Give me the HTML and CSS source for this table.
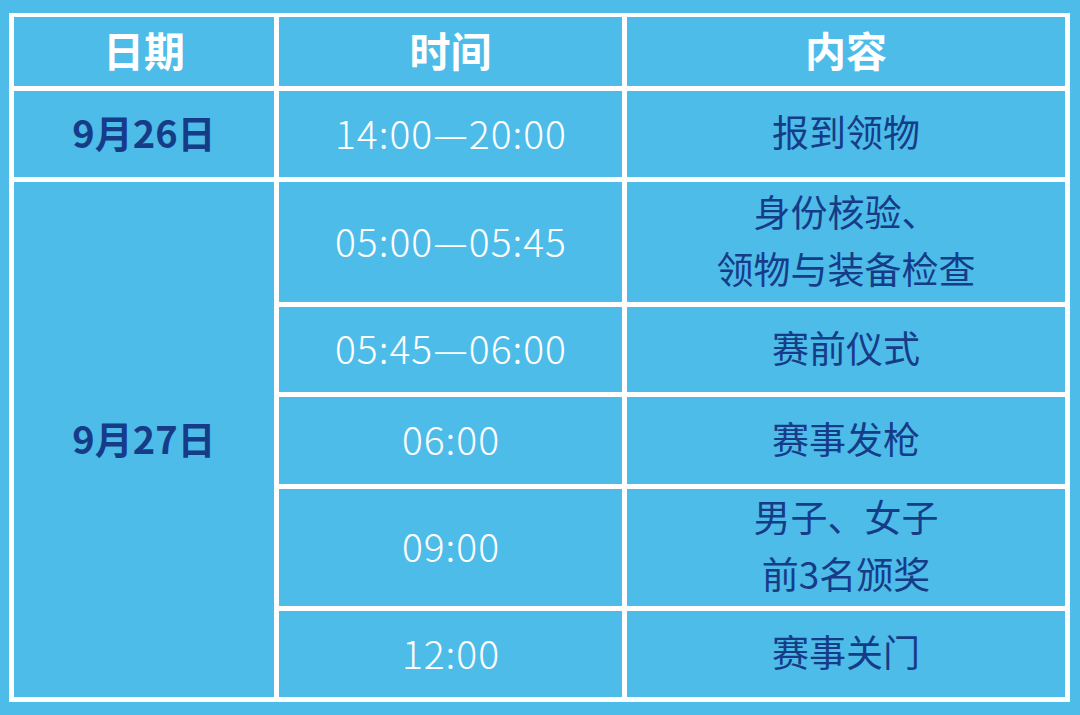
FILE: index.html
```html
<!DOCTYPE html>
<html lang="zh-CN">
<head>
<meta charset="utf-8">
<title>日程</title>
<link rel="stylesheet" href="styles.css">
</head>
<body>
<div class="schedule">
  <div class="cell head">日期</div>
  <div class="cell head">时间</div>
  <div class="cell head">内容</div>

  <div class="cell date">9月26日</div>
  <div class="cell time">14:00—20:00</div>
  <div class="cell item">报到领物</div>

  <div class="cell date span5">9月27日</div>
  <div class="cell time">05:00—05:45</div>
  <div class="cell item">身份核验、<br>领物与装备检查</div>

  <div class="cell time">05:45—06:00</div>
  <div class="cell item">赛前仪式</div>

  <div class="cell time">06:00</div>
  <div class="cell item">赛事发枪</div>

  <div class="cell time">09:00</div>
  <div class="cell item">男子、女子<br>前3名颁奖</div>

  <div class="cell time">12:00</div>
  <div class="cell item">赛事关门</div>
</div>
</body>
</html>
```
FILE: styles.css
```css
html, body {
  margin: 0;
  padding: 0;
  background: #4dbce9;
}

body {
  padding: 13px 0 0 9px;
  font-family: "Noto Sans CJK SC", "Noto Sans", sans-serif;
}

.schedule {
  display: grid;
  grid-template-columns: 260px 343px 438px;
  grid-template-rows: 69px 86px 120px 85px 87px 117px 86px;
  gap: 5px;
  padding: 4px 5px 5px 5px;
  background: #ffffff;
  width: max-content;
}

.cell {
  background: #4dbce9;
  display: flex;
  align-items: center;
  justify-content: center;
  text-align: center;
  padding-bottom: 5px;
  box-sizing: border-box;
}

.head {
  color: #ffffff;
  font-weight: 700;
  font-size: 41px;
}

.date {
  color: #163c88;
  font-weight: 700;
  font-size: 38px;
}

.span5 {
  grid-row: 3 / span 5;
  grid-column: 1;
}

.time {
  color: #ffffff;
  font-weight: 300;
  font-size: 39px;
  letter-spacing: 1px;
  padding-left: 1px;
}

.item {
  color: #163c88;
  font-weight: 400;
  font-size: 37px;
  line-height: 57px;
}
```
